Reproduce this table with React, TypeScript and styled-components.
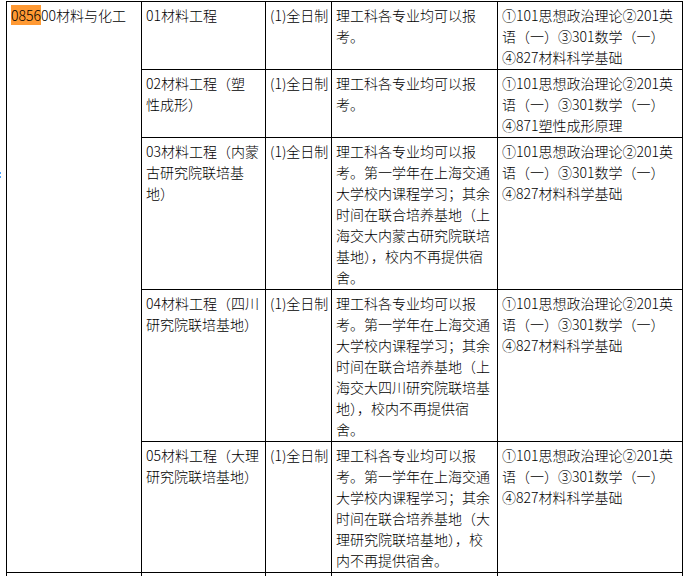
import React from "react";
import styled, { createGlobalStyle } from "styled-components";

const Global = createGlobalStyle`
  html, body { margin: 0; padding: 0; background: #fff; }
  body { font-family: "Noto Sans CJK SC", "Microsoft YaHei", sans-serif; color: #000; }
`;

const Page = styled.div`
  position: relative;
  padding: 1px 0 0 6px;
  height: 576px;
  overflow: hidden;
`;

const Table = styled.table`
  border-collapse: collapse;
  table-layout: fixed;
  width: 677px;
  font-size: 14px;
  font-weight: 300;
  line-height: 21px;
`;

const Cell = styled.td`
  border: 1px solid #000;
  vertical-align: top;
  padding: 3px 3px 1px 4px;
  overflow: hidden;
`;

const Line = styled.span`
  display: block;
  white-space: nowrap;
`;

const Mark = styled.span`
  background: #ff9933;
`;

const Cursor = styled.span`
  position: absolute;
  left: 0;
  top: 172px;
  width: 1px;
  height: 7px;
  background: linear-gradient(#4aa3ff 0 2px, transparent 2px 4px, #4aa3ff 4px 6px, transparent 6px);
`;

const Spacer = styled.tr`
  height: 40px;
`;

type Row = { name: string[]; req: string[]; exams: string[] };

const ex827 = ["①101思想政治理论②201英", "语（一）③301数学（一）", "④827材料科学基础"];

const rows: Row[] = [
  { name: ["01材料工程"], req: ["理工科各专业均可以报", "考。"], exams: ex827 },
  {
    name: ["02材料工程（塑", "性成形）"],
    req: ["理工科各专业均可以报", "考。"],
    exams: ["①101思想政治理论②201英", "语（一）③301数学（一）", "④871塑性成形原理"],
  },
  {
    name: ["03材料工程（内蒙", "古研究院联培基", "地）"],
    req: [
      "理工科各专业均可以报",
      "考。第一学年在上海交通",
      "大学校内课程学习；其余",
      "时间在联合培养基地（上",
      "海交大内蒙古研究院联培",
      "基地），校内不再提供宿",
      "舍。",
    ],
    exams: ex827,
  },
  {
    name: ["04材料工程（四川", "研究院联培基地）"],
    req: [
      "理工科各专业均可以报",
      "考。第一学年在上海交通",
      "大学校内课程学习；其余",
      "时间在联合培养基地（上",
      "海交大四川研究院联培基",
      "地），校内不再提供宿",
      "舍。",
    ],
    exams: ex827,
  },
  {
    name: ["05材料工程（大理", "研究院联培基地）"],
    req: [
      "理工科各专业均可以报",
      "考。第一学年在上海交通",
      "大学校内课程学习；其余",
      "时间在联合培养基地（大",
      "理研究院联培基地），校",
      "内不再提供宿舍。",
    ],
    exams: ex827,
  },
];

const Lines = ({ items }: { items: string[] }) => (
  <>
    {items.map((t, i) => (
      <Line key={i}>{t}</Line>
    ))}
  </>
);

export default function App() {
  return (
    <>
      <Global />
      <Page>
        <Cursor />
        <Table>
          <colgroup>
            <col style={{ width: 135 }} />
            <col style={{ width: 124 }} />
            <col style={{ width: 66 }} />
            <col style={{ width: 166 }} />
            <col style={{ width: 185 }} />
          </colgroup>
          <tbody>
            {rows.map((r, i) => (
              <tr key={i}>
                {i === 0 && (
                  <Cell rowSpan={rows.length}>
                    <Line>
                      <Mark>0856</Mark>00材料与化工
                    </Line>
                  </Cell>
                )}
                <Cell>
                  <Lines items={r.name} />
                </Cell>
                <Cell>
                  <Line>(1)全日制</Line>
                </Cell>
                <Cell>
                  <Lines items={r.req} />
                </Cell>
                <Cell>
                  <Lines items={r.exams} />
                </Cell>
              </tr>
            ))}
            <Spacer>
              <Cell />
              <Cell />
              <Cell />
              <Cell />
              <Cell />
            </Spacer>
          </tbody>
        </Table>
      </Page>
    </>
  );
}
